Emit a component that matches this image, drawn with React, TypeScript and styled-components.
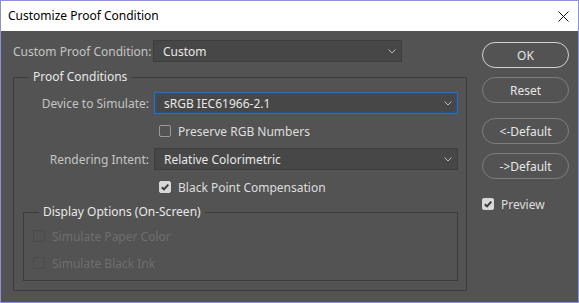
import styled, { createGlobalStyle } from "styled-components";

const GlobalStyle = createGlobalStyle`
    html, body {
        margin: 0;
        padding: 0;
        background: #ffffff;
    }
    body {
        font-family: "Noto Sans", "DejaVu Sans", sans-serif;
        font-size: 12px;
    }
`;

function Chevron() {
    return (
        <svg width="8" height="5" viewBox="0 0 8 5">
            <path d="M0.5 0.5 L4 4 L7.5 0.5" fill="none" stroke="#bdbdbd" strokeWidth="1" />
        </svg>
    );
}

function CheckMark() {
    return (
        <svg width="10" height="10" viewBox="0 0 10 10">
            <path d="M1.8 5.2 L4 7.4 L8.3 2.6" fill="none" stroke="#3a3a3a" strokeWidth="2" />
        </svg>
    );
}

function Check({ label, checked, disabled }: { label: string; checked?: boolean; disabled?: boolean }) {
    return (
        <CheckRow $disabled={disabled}>
            <Box $checked={checked} $disabled={disabled}>{checked && <CheckMark />}</Box>
            <span>{label}</span>
        </CheckRow>
    );
}

function Dropdown({ value, width, focused }: { value: string; width: number; focused?: boolean }) {
    return (
        <Select $width={width} $focused={focused}>
            <span>{value}</span>
            <Chevron />
        </Select>
    );
}

export default function App() {
    return (
        <>
            <GlobalStyle />
            <Window>
                <TitleBar>
                    <span>Customize Proof Condition</span>
                    <svg width="11" height="11" viewBox="0 0 11 11">
                        <path d="M0.5 0.5 L10.5 10.5 M10.5 0.5 L0.5 10.5" stroke="#111" strokeWidth="1" />
                    </svg>
                </TitleBar>
                <Body>
                    <LeftColumn>
                        <Row>
                            <Label>Custom Proof Condition:</Label>
                            <Dropdown value="Custom" width={249} />
                        </Row>
                        <Group $outer>
                            <Legend>Proof Conditions</Legend>
                            <Row>
                                <Label>Device to Simulate:</Label>
                                <Dropdown value="sRGB IEC61966-2.1" width={304} focused />
                            </Row>
                            <Indent>
                                <Check label="Preserve RGB Numbers" />
                            </Indent>
                            <Row>
                                <Label>Rendering Intent:</Label>
                                <Dropdown value="Relative Colorimetric" width={304} />
                            </Row>
                            <Indent>
                                <Check label="Black Point Compensation" checked />
                            </Indent>
                            <Group>
                                <Legend>Display Options (On-Screen)</Legend>
                                <DisabledList>
                                    <Check label="Simulate Paper Color" disabled />
                                    <Check label="Simulate Black Ink" disabled />
                                </DisabledList>
                            </Group>
                        </Group>
                    </LeftColumn>
                    <Buttons>
                        <Button $primary>OK</Button>
                        <Button $gap={9}>Reset</Button>
                        <Button $gap={15}>&lt;-Default</Button>
                        <Button $gap={9}>-&gt;Default</Button>
                        <PreviewRow>
                            <Check label="Preview" checked />
                        </PreviewRow>
                    </Buttons>
                </Body>
            </Window>
        </>
    );
}

const Window = styled.div`
    width: 579px;
    height: 303px;
    box-sizing: border-box;
    border: 1px solid #8d8fdf;
    display: flex;
    flex-direction: column;
    background: #535353;
`;

const TitleBar = styled.div`
    height: 30px;
    flex: none;
    background: #ffffff;
    display: flex;
    align-items: center;
    justify-content: space-between;
    padding: 0 9px 0 7px;
    color: #000000;
    font-size: 12px;
    span {
        margin-top: -1px;
    }
`;

const Body = styled.div`
    flex: 1;
    display: flex;
    padding: 9px 9px 0 12px;
    gap: 15px;
`;

const LeftColumn = styled.div`
    width: 454px;
    display: flex;
    flex-direction: column;
`;

const Row = styled.div`
    display: flex;
    align-items: center;
    gap: 5px;
    height: 22px;
`;

const Label = styled.div`
    width: 135px;
    text-align: right;
    color: #c4c4c4;
    white-space: nowrap;
`;

const Select = styled.div<{ $width: number; $focused?: boolean }>`
    width: ${({ $width }) => $width}px;
    height: 22px;
    box-sizing: border-box;
    display: flex;
    align-items: center;
    justify-content: space-between;
    padding: 0 5px 0 9px;
    background: #474747;
    border: 1px solid ${({ $focused }) => ($focused ? "#2f6bb8" : "#3d3d3d")};
    box-shadow: ${({ $focused }) => ($focused ? "inset 0 0 0 1px #23528f" : "none")};
    color: #e8e8e8;
    white-space: nowrap;
`;

const Group = styled.fieldset<{ $outer?: boolean }>`
    margin: ${({ $outer }) => ($outer ? "7px 0 0 0" : "0 8px 9px 9px")};
    padding: 0;
    border: 1px solid #3c3c3c;
    display: flex;
    flex-direction: column;
    min-width: 0;
    & > ${Row}:first-of-type {
        margin-top: 7px;
    }
`;

const Legend = styled.legend`
    margin-left: 15px;
    padding: 0 4px;
    line-height: 16px;
    height: 16px;
    color: #e8e8e8;
`;

const Indent = styled.div`
    padding-left: 145px;
    margin: 9px 0;
`;

const CheckRow = styled.div<{ $disabled?: boolean }>`
    display: flex;
    align-items: center;
    gap: 7px;
    height: 16px;
    color: ${({ $disabled }) => ($disabled ? "#6e6e6e" : "#dedede")};
    white-space: nowrap;
`;

const Box = styled.div<{ $checked?: boolean; $disabled?: boolean }>`
    width: 12px;
    height: 12px;
    box-sizing: border-box;
    border-radius: 2px;
    display: flex;
    align-items: center;
    justify-content: center;
    border: 1px solid ${({ $checked, $disabled }) => ($checked ? "#d8d8d8" : $disabled ? "#4b4b4b" : "#9a9a9a")};
    background: ${({ $checked }) => ($checked ? "#d8d8d8" : "transparent")};
`;

const DisabledList = styled.div`
    display: flex;
    flex-direction: column;
    gap: 11px;
    padding: 8px 0 9px 9px;
`;

const Buttons = styled.div`
    width: 87px;
    display: flex;
    flex-direction: column;
    padding-top: 2px;
`;

const Button = styled.div<{ $primary?: boolean; $gap?: number }>`
    height: 26px;
    box-sizing: border-box;
    margin-top: ${({ $gap }) => $gap ?? 0}px;
    border: 1px solid ${({ $primary }) => ($primary ? "#d2d2d2" : "#7e7e7e")};
    border-radius: 13px;
    display: flex;
    align-items: center;
    justify-content: center;
    color: #e6e6e6;
`;

const PreviewRow = styled.div`
    margin-top: 17px;
`;
